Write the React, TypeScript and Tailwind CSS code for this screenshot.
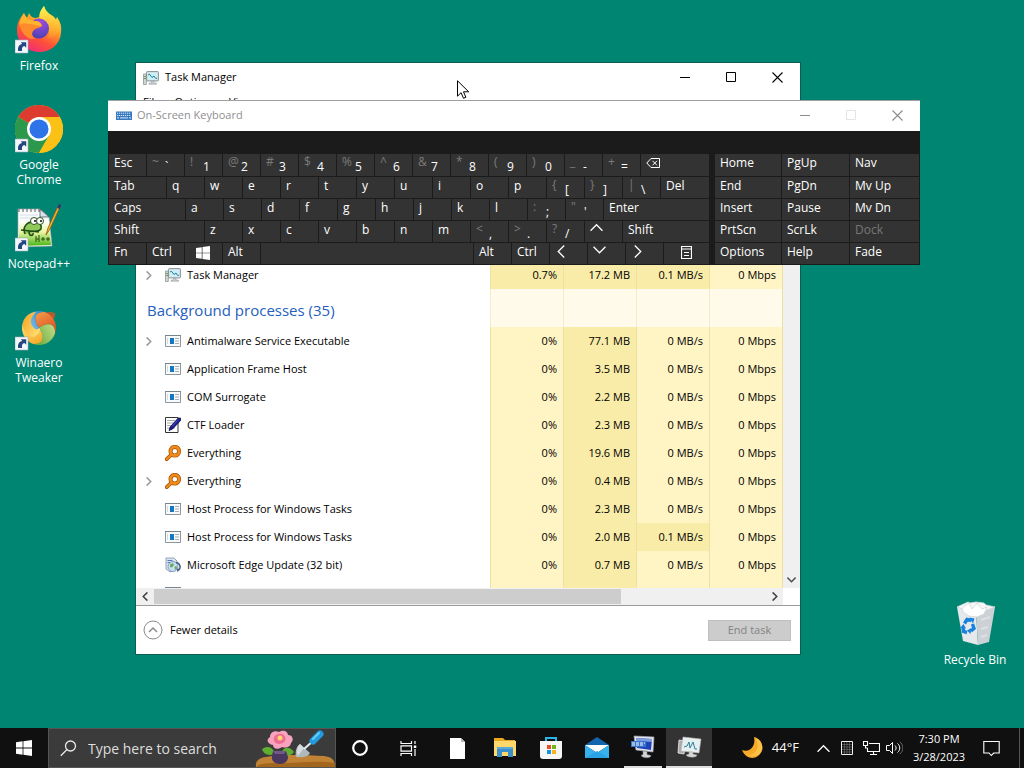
import React from 'react';

type IconKind = 'monitor' | 'app' | 'pen' | 'key' | 'update';

const svgBase = 'block shrink-0';

function WindowsLogo({ className }: { className: string }) {
  return (
    <svg viewBox="0 0 16 16" className={`${svgBase} ${className}`} fill="#fff" aria-hidden="true">
      <path d="M0 2.2 6.6 1.3v6.3H0zM7.4 1.2 16 0v7.6H7.4zM0 8.4h6.6v6.3L0 13.8zM7.4 8.4H16V16l-8.6-1.2z" />
    </svg>
  );
}

function MonitorIcon() {
  return (
    <svg viewBox="0 0 16 16" className={`${svgBase} size-4`} aria-hidden="true">
      <path d="M.5 4h2.800v10.500H.5z" fill="#d5d8d5" stroke="#8d9590" strokeWidth=".8" />
      <path d="M1 6.500h2M1 8.500h2" stroke="#6c9a62" />
      <rect x="3.600" y="1.600" width="11.800" height="9.300" rx=".6" fill="#dfe6ea" stroke="#869199" strokeWidth="1" />
      <rect x="5" y="3" width="9" height="6.500" fill="#c9f1f8" />
      <path d="m5 5 1.500-.8 2.500 3.300 2-1.500 1.500 2.300H14" fill="none" stroke="#257d9b" strokeWidth="1" />
      <path d="M8.500 11h2.500v2h2.500v1.300H6V13h2.500z" fill="#c5cbce" stroke="#959da1" strokeWidth=".5" />
    </svg>
  );
}

function RowIcon({ kind }: { kind: IconKind }) {
  if (kind === 'monitor') return <MonitorIcon />;
  if (kind === 'app')
    return (
      <svg viewBox="0 0 16 16" className={`${svgBase} size-4`} aria-hidden="true">
        <path d="M.5 2.500h15v11H.5z" fill="#f8fafb" stroke="#8b979d" />
        <path d="M0 2.500h16" stroke="#76848b" strokeWidth="1" />
        <path d="M5 5h4v6H5z" fill="#1378c4" />
        <path d="M10 5.500h4M10 8h4M10 10.500h4" stroke="#a5adb2" />
        <path d="M2.500 5v6" stroke="#d5dcdf" />
      </svg>
    );
  if (kind === 'pen')
    return (
      <svg viewBox="0 0 16 16" className={`${svgBase} size-4`} aria-hidden="true">
        <path d="M.5.5h12.500v15H.5z" fill="#fff" stroke="#333" />
        <path d="M2.500 3.500h8M2.500 6h8M2.500 8.500h8M2.500 11h8" stroke="#555" strokeDasharray="1 1" />
        <path d="m4 13.500 1.200-3.600L13 1.300 15.600 1l.2 2.200-8.300 8.900z" fill="#16168c" stroke="#0a0a40" strokeWidth=".8" />
        <path d="m7 9.500 6.800-7" stroke="#4a58d8" />
      </svg>
    );
  if (kind === 'key')
    return (
      <svg viewBox="0 0 16 16" className={`${svgBase} size-4`} aria-hidden="true">
        <path d="M6.500 9.500 1.700 14.200" stroke="#a65006" strokeWidth="3.800" strokeLinecap="round" />
        <circle cx="9.800" cy="6.200" r="4.300" fill="#fff" stroke="#a65006" strokeWidth="4" />
        <path d="M6.500 9.500 1.800 14.100" stroke="#ee8b1a" strokeWidth="2.400" strokeLinecap="round" />
        <circle cx="9.800" cy="6.200" r="4.300" fill="none" stroke="#ee8b1a" strokeWidth="2.800" />
      </svg>
    );
  return (
    <svg viewBox="0 0 16 16" className={`${svgBase} size-4`} aria-hidden="true">
      <path d="M1 1h8l3 3v8l-7 3-4-3z" fill="#dce5ee" stroke="#7c8fae" strokeWidth=".8" />
      <path d="M2.500 3.500h5M2.500 5.500h7" stroke="#5b78b6" />
      <circle cx="8" cy="9.500" r="5" fill="#c6e0f2" stroke="#6f8db0" strokeWidth=".8" />
      <path d="M5 7.500 8 6l1 2-2 2.500-2-.5zM9.500 10l2-1.500.5 3-2 1.500z" fill="#6aa868" />
      <path d="M11 5.500c4 .5 5.500 5 2.500 7.500" stroke="#4a5d86" strokeWidth="1.500" fill="none" />
      <path d="m15.500 12-3 3-.8-3.200z" fill="#4a5d86" />
    </svg>
  );
}

function Chevron({ dir, className, stroke = 1 }: { dir: 'up' | 'down' | 'left' | 'right'; className: string; stroke?: number }) {
  const paths = {
    up: 'M.5 9 6 3.500 11.500 9',
    down: 'M.5 3.500 6 9l5.500-5.500',
    left: 'M8.500.5 3 6l5.500 5.500',
    right: 'M3.500.5 9 6l-5.500 5.500',
  };
  return (
    <svg viewBox="0 0 12 12" className={`${svgBase} ${className}`} fill="none" stroke="currentColor" strokeWidth={stroke} aria-hidden="true">
      <path d={paths[dir]} />
    </svg>
  );
}

function CaptionButtons({ tone, maxTone }: { tone: string; maxTone: string }) {
  const btn = 'flex h-[29px] w-[46px] items-center justify-center';
  return (
    <div className="flex">
      <button aria-label="Minimize" className={`${btn} ${tone}`}>
        <svg viewBox="0 0 11 11" className="size-[11px]" stroke="currentColor"><path d="M0 5.500h10" /></svg>
      </button>
      <button aria-label="Maximize" className={`${btn} ${maxTone}`}>
        <svg viewBox="0 0 11 11" className="size-[11px]" fill="none" stroke="currentColor"><path d="M.5.5h9v9h-9z" /></svg>
      </button>
      <button aria-label="Close" className={`${btn} ${tone}`}>
        <svg viewBox="0 0 11 11" className="size-[11px]" fill="none" stroke="currentColor" strokeWidth="1.100"><path d="M.5.5l10 10M10.500.5l-10 10" /></svg>
      </button>
    </div>
  );
}

interface Proc {
  name: string;
  icon: IconKind;
  expand?: boolean;
  values: [string, string, string, string];
}

const processes: Proc[] = [
  { name: 'Antimalware Service Executable', icon: 'app', expand: true, values: ['0%', '77.1 MB', '0 MB/s', '0 Mbps'] },
  { name: 'Application Frame Host', icon: 'app', values: ['0%', '3.5 MB', '0 MB/s', '0 Mbps'] },
  { name: 'COM Surrogate', icon: 'app', values: ['0%', '2.2 MB', '0 MB/s', '0 Mbps'] },
  { name: 'CTF Loader', icon: 'pen', values: ['0%', '2.3 MB', '0 MB/s', '0 Mbps'] },
  { name: 'Everything', icon: 'key', values: ['0%', '19.6 MB', '0 MB/s', '0 Mbps'] },
  { name: 'Everything', icon: 'key', expand: true, values: ['0%', '0.4 MB', '0 MB/s', '0 Mbps'] },
  { name: 'Host Process for Windows Tasks', icon: 'app', values: ['0%', '2.3 MB', '0 MB/s', '0 Mbps'] },
  { name: 'Host Process for Windows Tasks', icon: 'app', values: ['0%', '2.0 MB', '0.1 MB/s', '0 Mbps'] },
  { name: 'Microsoft Edge Update (32 bit)', icon: 'update', values: ['0%', '0.7 MB', '0 MB/s', '0 Mbps'] },
];

function ProcessRow({ proc }: { proc: Proc }) {
  return (
    <tr className="h-7">
      <th scope="row" className="p-0 text-left font-normal">
        <div className="flex h-7 items-center">
          <span className="flex w-[29px] shrink-0 items-center pl-2">
            {proc.expand && (
              <button aria-label={`Expand ${proc.name}`} className="text-[#999]">
                <Chevron dir="right" className="size-[9px]" stroke={2} />
              </button>
            )}
          </span>
          <RowIcon kind={proc.icon} />
          <span className="pl-1.5 whitespace-nowrap">{proc.name}</span>
        </div>
      </th>
      {proc.values.map((v, i) => {
        const hot = i === 1 || v === '0.1 MB/s' || v === '0.7%';
        return (
          <td key={i} className={`border-l border-[#eee0a0] p-0 pr-1.5 text-right whitespace-nowrap ${hot ? 'bg-[#f9eca8]' : 'bg-[#fff4c4]'}`}>
            {v}
          </td>
        );
      })}
    </tr>
  );
}

function TaskManager() {
  return (
    <section aria-label="Task Manager" className="absolute top-[62px] left-[135px] flex h-[593px] w-[666px] flex-col border border-[#0b5f52] bg-white text-[11px] text-black">
      <header className="flex h-[29px] shrink-0 items-start justify-between">
        <div className="flex h-[29px] items-center gap-1.5 pl-[7px]">
          <MonitorIcon />
          <span>Task Manager</span>
        </div>
        <CaptionButtons tone="text-black" maxTone="text-black" />
      </header>
      <nav className="flex h-5 shrink-0 items-center gap-3.5 px-[7px]">
        <button>File</button>
        <button>Options</button>
        <button>View</button>
      </nav>
      <div className="mt-[149px] flex min-h-0 flex-1">
        <div className="min-w-0 flex-1 overflow-hidden">
          <table className="w-full table-fixed border-separate border-spacing-0">
            <colgroup>
              <col />
              <col className="w-[73px]" />
              <col className="w-[73px]" />
              <col className="w-[73px]" />
              <col className="w-[73px]" />
            </colgroup>
            <tbody>
              <ProcessRow proc={{ name: 'Task Manager', icon: 'monitor', expand: true, values: ['0.7%', '17.2 MB', '0.1 MB/s', '0 Mbps'] }} />
              <tr className="h-[38px]">
                <th scope="rowgroup" className="p-0 pt-1 pl-[11px] text-left text-[15px] font-normal whitespace-nowrap text-[#2560bd]">
                  Background processes (35)
                </th>
                {[0, 1, 2, 3].map((i) => (
                  <td key={i} className="border-l border-[#f3ead0] bg-[#fffaea] p-0" />
                ))}
              </tr>
              {processes.map((p, i) => (
                <ProcessRow key={i} proc={p} />
              ))}
              <tr className="h-7 align-top">
                <td className="p-0 pt-2 pl-[29px]"><span className="block h-1 w-4 border-t border-[#76848b] bg-white" /></td>
                <td className="border-l border-[#eee0a0] bg-[#fff4c4]" />
                <td className="border-l border-[#eee0a0] bg-[#f9eca8]" />
                <td className="border-l border-[#eee0a0] bg-[#fff4c4]" />
                <td className="border-l border-[#eee0a0] bg-[#fff4c4]" />
              </tr>
            </tbody>
          </table>
        </div>
        <div className="flex w-[18px] flex-col items-center justify-end border-l border-[#eee0a0] bg-[#f0f0f0] pb-1 text-[#505050]">
          <button aria-label="Scroll down"><Chevron dir="down" className="size-[9px]" stroke={2} /></button>
        </div>
      </div>
      <div className="flex h-[17px] shrink-0 pr-[17px]">
        <div className="flex flex-1 items-center bg-[#f0f0f0] text-[#404040]">
          <button aria-label="Scroll left" className="flex w-[18px] justify-center"><Chevron dir="left" className="size-[9px]" stroke={2} /></button>
          <div className="flex h-[15px] flex-1"><div className="w-[467px] bg-[#cdcdcd]" /></div>
          <button aria-label="Scroll right" className="flex w-[17px] justify-center"><Chevron dir="right" className="size-[9px]" stroke={2} /></button>
        </div>
      </div>
      <footer className="flex h-[49px] shrink-0 items-center justify-between border-t border-[#9a9a9a] pr-[9px] pl-[7px]">
        <button className="flex items-center gap-[7px]">
          <svg viewBox="0 0 20 20" className="size-5" fill="none" stroke="#8a8a8a" aria-hidden="true">
            <circle cx="10" cy="10" r="9" />
            <path d="m6 12 4-4 4 4" strokeWidth="1.500" />
          </svg>
          Fewer details
        </button>
        <button disabled className="h-[21px] w-[83px] border border-[#bfbfbf] bg-[#cccccc] text-[#838383]">End task</button>
      </footer>
    </section>
  );
}

const keyBase = 'flex shrink-0 items-start bg-[#333] pl-[5px] text-left text-white hover:bg-[#444]';
const std = 'w-[37px]';
const fill = 'flex-1';

interface KeyDef {
  label?: string;
  alt?: string;
  size?: string;
  art?: 'back' | 'win' | 'up' | 'down' | 'left' | 'right' | 'menu';
}

function KeyArt({ art }: { art: NonNullable<KeyDef['art']> }) {
  if (art === 'win') return <WindowsLogo className="mt-[3px] ml-1.5 size-[14px]" />;
  if (art === 'back')
    return (
      <svg viewBox="0 0 14 12" className="mt-[3px] h-3 w-[14px]" fill="none" stroke="#fff" aria-hidden="true">
        <path d="M5 1.500h8.500v9H5L.8 6zM6.500 3.800l4.500 4.500M11 3.800 6.500 8.300" />
      </svg>
    );
  if (art === 'menu')
    return (
      <svg viewBox="0 0 11 13" className="mt-[3px] ml-3 h-[13px] w-[11px]" fill="none" stroke="#fff" aria-hidden="true">
        <path d="M.5.5h10v12H.5zM0 3h11M3 6.500h5M3 9.500h5" strokeWidth="1.200" />
      </svg>
    );
  return <Chevron dir={art} className={art === 'up' || art === 'down' ? 'size-[13px]' : 'mt-0.5 size-[13px]'} stroke={1.2} />;
}

function Key({ k }: { k: KeyDef }) {
  return (
    <button className={`${keyBase} ${k.size ?? std}`} aria-label={k.art}>
      {k.art && <KeyArt art={k.art} />}
      {k.alt !== undefined && <span className="w-[13px] shrink-0 leading-4 text-[#7b7b7b]">{k.alt}</span>}
      {k.label && <span className={k.alt !== undefined ? 'pt-1 leading-[18px]' : 'leading-[18px]'}>{k.label}</span>}
    </button>
  );
}

const letters = (s: string): KeyDef[] => s.split('').map((label) => ({ label }));

const keyRows: KeyDef[][] = [
  [
    { label: 'Esc' }, { alt: '~', label: '`' }, { alt: '!', label: '1' }, { alt: '@', label: '2' }, { alt: '#', label: '3' },
    { alt: '$', label: '4' }, { alt: '%', label: '5' }, { alt: '^', label: '6' }, { alt: '&', label: '7' }, { alt: '*', label: '8' },
    { alt: '(', label: '9' }, { alt: ')', label: '0' }, { alt: '_', label: '-' }, { alt: '+', label: '=' }, { art: 'back', size: fill },
  ],
  [{ label: 'Tab', size: 'w-[57px]' }, ...letters('qwertyuiop'), { alt: '{', label: '[' }, { alt: '}', label: ']' }, { alt: '|', label: '\\' }, { label: 'Del', size: fill }],
  [{ label: 'Caps', size: 'w-[76px]' }, ...letters('asdfghjkl'), { alt: ':', label: ';' }, { alt: '"', label: "'" }, { label: 'Enter', size: fill }],
  [{ label: 'Shift', size: 'w-[95px]' }, ...letters('zxcvbnm'), { alt: '<', label: ',' }, { alt: '>', label: '.' }, { alt: '?', label: '/' }, { art: 'up' }, { label: 'Shift', size: fill }],
  [
    { label: 'Fn' }, { label: 'Ctrl' }, { art: 'win' }, { label: 'Alt' }, { size: 'w-[212px]' }, { label: 'Alt' }, { label: 'Ctrl' },
    { art: 'left' }, { art: 'down' }, { art: 'right' }, { art: 'menu', size: fill },
  ],
];

const navKeys = [['Home', 'PgUp'], ['End', 'PgDn'], ['Insert', 'Pause'], ['PrtScn', 'ScrLk'], ['Options', 'Help']];
const sideKeys = ['Nav', 'Mv Up', 'Mv Dn', 'Dock', 'Fade'];

const keyGrid = 'grid grid-rows-[22px_21px_21px_21px_21px] gap-px';

function OnScreenKeyboard() {
  return (
    <section aria-label="On-Screen Keyboard" className="absolute top-[100px] left-[108px] w-[812px] border-t border-[#a0a0a0] bg-[#1b1b1b] text-[12px]">
      <header className="flex h-[30px] items-start justify-between bg-white text-[11px]">
        <div className="flex h-[29px] items-center gap-[5px] pl-2 text-[#909090]">
          <svg viewBox="0 0 16 9" className="h-[9px] w-4" aria-hidden="true">
            <path d="M0 .5h16v8.500H0z" fill="#3878bd" />
            <path d="M1 2.200h14M1 4.500h14" stroke="#d8eaff" strokeDasharray="1.200 .8" />
            <path d="M1 6.900h2M4 6.900h8M13 6.900h2" stroke="#d8eaff" />
          </svg>
          <span>On-Screen Keyboard</span>
        </div>
        <CaptionButtons tone="text-[#8c8c8c]" maxTone="text-[#e4e4e4]" />
      </header>
      <div className="flex pt-[23px] pr-px pb-px pl-px">
        <div className={`flex-1 ${keyGrid}`}>
          {keyRows.map((row, r) => (
            <div key={r} className="flex gap-px">
              {row.map((k, i) => <Key key={i} k={k} />)}
            </div>
          ))}
        </div>
        <div className={`ml-1.5 ${keyGrid}`}>
          {navKeys.map((pair) => (
            <div key={pair[0]} className="flex gap-px">
              <Key k={{ label: pair[0], size: 'w-[66px]' }} />
              <Key k={{ label: pair[1], size: 'w-[67px]' }} />
            </div>
          ))}
        </div>
        <div className={`ml-px ${keyGrid}`}>
          {sideKeys.map((label) => (
            <button key={label} className="flex w-[69px] items-start bg-[#333] pl-[5px] leading-[18px] text-white disabled:text-[#777]" disabled={label === 'Dock'}>
              {label}
            </button>
          ))}
        </div>
      </div>
    </section>
  );
}

function ShortcutBadge() {
  return (
    <g>
      <path d="M0 34h13v13H0z" fill="#f4f7fb" stroke="#9fb0c0" strokeWidth=".6" />
      <path d="M3.200 45c-.8-4 1-6.600 4-7L5.800 36.300h5.400v5.500L9.400 40c-2 .3-2.800 2-2.300 5z" fill="#24477f" />
    </g>
  );
}

const swirl = 'M24 8A17 17 0 0 1 41 25C38 15 30 16 24 25C15 19 14 11 24 8Z';

const desktopArt = {
  firefox: (
    <svg viewBox="0 0 48 48" className="size-12" aria-hidden="true">
      <defs>
        <linearGradient id="fx" x1=".8" y1="0" x2=".3" y2="1"><stop offset="0" stopColor="#fff14a" /><stop offset=".4" stopColor="#ffa22a" /><stop offset=".7" stopColor="#ff5138" /><stop offset="1" stopColor="#ee2c7a" /></linearGradient>
        <radialGradient id="fxc" cx=".6" cy=".2" r=".8"><stop offset="0" stopColor="#a04be0" /><stop offset="1" stopColor="#4a41b5" /></radialGradient>
        <linearGradient id="fxf" x1=".4" y1="0" x2=".6" y2="1"><stop offset="0" stopColor="#fff04e" /><stop offset="1" stopColor="#ffab2c" stopOpacity=".3" /></linearGradient>
      </defs>
      <path d="M29 0c1 5 4 7 7 9 3 1 4 3 5 5l1-3c3 5 5 9 4 16-1 12-11 19-22 19S2 37 2 25c0-6 1-10 5-15l2 5 3-3 2-5c1 3 4 5 7 5l3-1c1-5 3-8 5-11z" fill="url(#fx)" />
      <path d="M29 0c-5 6-6 10-2 15 6 4 9 10 6 17 6 0 11-5 13-10 0-4-2-8-4-11l-1 3c-2-5-9-5-12-14z" fill="url(#fxf)" />
      <circle cx="24" cy="22.500" r="10" fill="url(#fxc)" />
      <path d="M4 17c2-4 2-6 5-10 2 5 6 8 11 8 4 0 6 2 7 5-2 2-6 2-8 4-3 3-2 6 1 9-8 1-14-6-16-16z" fill="#ff8a2b" />
      <path d="M9 7c1 4 5 7 11 8 4 0 6 2 7 5-5 0-9-2-13-2-4-1-7-1-9 1 0-5 1-8 4-12z" fill="#ffb32f" />
      <ShortcutBadge />
    </svg>
  ),
  chrome: (
    <svg viewBox="0 0 48 48" className="size-12" aria-hidden="true">
      <circle cx="24" cy="24" r="24" fill="#fbc116" />
      <path d="M24 24 3.200 12A24 24 0 0 1 44.800 12z" fill="#dd3b30" />
      <path d="M24 24 3.200 12A24 24 0 0 0 24 48l10.400-18z" fill="#2b984b" />
      <path d="M24 12h20.800A24 24 0 0 1 24 48l10.400-18z" fill="#fbc116" />
      <circle cx="24" cy="24" r="12" fill="#fff" />
      <circle cx="24" cy="24" r="9.500" fill="#2f73e8" />
      <ShortcutBadge />
    </svg>
  ),
  notepad: (
    <svg viewBox="0 0 48 48" className="size-12" aria-hidden="true">
      <defs><linearGradient id="np" x2="0" y2="1"><stop offset="0" stopColor="#fff" /><stop offset=".45" stopColor="#e9f5a0" /><stop offset="1" stopColor="#48b514" /></linearGradient></defs>
      <path d="M3 5h22l9 8 3 29-34 1z" fill="#fafafa" stroke="#aaa" strokeWidth=".6" />
      <path d="M25 5v8h9z" fill="#d8e2ea" stroke="#456" strokeWidth=".8" />
      <path d="M4 17h30l2 24-32 1z" fill="url(#np)" />
      <path d="M4 5v3M8 5v3M12 5v3M16 5v3M20 5v3M24 5v3" stroke="#555" />
      <path d="M5 11h18M5 14h18" stroke="#c3d5e5" strokeWidth=".7" />
      <path d="M10 30c-3-7 2-13 10-12 5 0 7 3 6 7-3 4-8 1-12 3 0 5 5 4 4 1M6 26l18 2" fill="#8fc95a" stroke="#1f4c14" strokeWidth="1.500" />
      <circle cx="19" cy="17" r="3.500" fill="#fff" stroke="#2d5120" /><circle cx="25" cy="17" r="3.500" fill="#fff" stroke="#2d5120" />
      <circle cx="20" cy="17" r="1" /><circle cx="26" cy="17" r="1" />
      <path d="M21 32v6M24 31v7M21 35h3M26 35h4M28 33v4M31 35h4M33 33v4" stroke="#254d10" strokeWidth="1" />
      <path d="m31 31 2-7L43 2l2 1-10 22z" fill="#f2b42d" stroke="#8a5a18" strokeWidth=".8" />
      <path d="m42 4 2-4 2 1-1 4z" fill="#333770" />
      <ShortcutBadge />
    </svg>
  ),
  winaero: (
    <svg viewBox="0 0 48 48" className="size-12" aria-hidden="true">
      <defs>
        <linearGradient id="wy" x2="1" y2=".6"><stop offset="0" stopColor="#f5a21f" /><stop offset="1" stopColor="#ffdc70" /></linearGradient>
        <linearGradient id="wb" x2="1" y2=".6"><stop offset="0" stopColor="#a5d8f2" /><stop offset="1" stopColor="#3b8ed6" /></linearGradient>
        <linearGradient id="wr" x2="1" y2=".6"><stop offset="0" stopColor="#f4a24e" /><stop offset="1" stopColor="#e2501e" /></linearGradient>
        <linearGradient id="wg" x2="1" y2=".6"><stop offset="0" stopColor="#c8df8a" /><stop offset="1" stopColor="#6cae43" /></linearGradient>
      </defs>
      <path d="M33 17c5 0 8-2 7-7-5-2-9-1-12 1z" fill="#e2501e" opacity=".8" />
      <path d={swirl} fill="url(#wr)" transform="rotate(20 24 25)" />
      <path d={swirl} fill="url(#wg)" transform="rotate(110 24 25)" />
      <path d={swirl} fill="url(#wy)" transform="rotate(200 24 25)" />
      <path d={swirl} fill="url(#wb)" transform="rotate(290 24 25)" />
      <path d="M8 20c1-6 7-11 13-11-5 5-7 10-3 15 2 3 5 3 7 1 0 5-3 8-7 9-6-1-11-7-10-14z" fill="url(#wy)" />
      <ShortcutBadge />
    </svg>
  ),
  bin: (
    <svg viewBox="0 0 48 48" className="size-12" aria-hidden="true">
      <path d="m6 7 19 6 2 32-15-4z" fill="#e6e9ec" />
      <path d="m25 13 19-6-6 35-11 3z" fill="#ccd1d5" />
      <path d="m6 7 11-5 2 1 6-1 8 1 2 2 9 2-19 7z" fill="#f4f6f7" stroke="#d5dadd" strokeWidth=".8" />
      <path d="m11 8 7-5 3 6 5-6 5 6 5-2-3 7-7 3-8-1-6-4z" fill="#fff" stroke="#cbd1d5" strokeWidth=".7" />
      <path d="m30 20 9-3M30 29l7-2M30 37l6-2" stroke="#dde1e4" strokeWidth="2" />
      <g fill="none" stroke="#1781df" strokeWidth="3.400">
        <path d="M13.500 23.500 16 19.500l4 1" />
        <path d="m21.500 24 1.500 4.500-3 2.500" />
        <path d="M16 32.500 12.500 31.500l-.5-4" />
      </g>
      <path d="m18 17.500 5.500 1-1.500 5zM20.500 28l-1 6-3.500-3.500zM9 28l3.500-4 2.500 4.500z" fill="#1781df" />
    </svg>
  ),
};

function DesktopIcon({ art, label }: { art: keyof typeof desktopArt; label: string }) {
  return (
    <a href="#" className="flex h-[99px] w-[76px] flex-col items-center gap-1 text-center text-[12px] leading-[15px] text-white">
      {desktopArt[art]}
      <span className="w-min">{label}</span>
    </a>
  );
}

function Cursor() {
  return (
    <svg viewBox="0 0 13 20" className="absolute top-20 left-[457px] h-5 w-[13px]" fill="#fff" stroke="#000" aria-hidden="true">
      <path d="M.5.8v15.400l3.600-3.500 2.400 5.600 2.400-1-2.400-5.500h5.200z" />
    </svg>
  );
}

function SearchArt() {
  return (
    <svg viewBox="0 0 80 38" className="h-[38px] w-20 shrink-0" aria-hidden="true">
      <path d="M1 38c-1-6 3-9 10-10 15-3 40-2 58-1 8 1 11 4 11 11z" fill="#c08234" />
      <path d="M2 38c0-3 8-4 20-4 20 0 40-3 58 0v4z" fill="#a3661f" />
      <path d="M7 20c7-5 12 0 13 5-6 2-11 1-13-5zM39 23c-5-7-11-4-12 0 3 5 8 5 12 0z" fill="#5fae31" />
      <path d="M18 22h13l2 6c0 4-3 7-8 7s-9-3-8-8z" fill="#493760" />
      <path d="M18 22h13l-2 3h-9z" fill="#745889" />
      <path d="M24 3c5-3 9 0 9 3 5 0 6 5 3 8-1 5-6 5-9 4-4 3-9 2-9-2-6-1-7-6-3-8 0-5 5-7 9-5z" fill="#f7a3bd" />
      <path d="M23 5c5-1 9 3 7 7-3 4-9 4-11 0-1-4 1-6 4-7z" fill="#ee6c92" />
      <circle cx="25" cy="9" r="2.500" fill="#ffd66f" />
      <path d="M45 15l10 9c-2 4-8 5-14 4-1-5 0-10 4-13z" fill="#aeb8bd" />
      <path d="m45 15 4 4-6 8c-2-4-1-9 2-12z" fill="#d6dde0" />
      <path d="m49 20 9-8" stroke="#e6edf0" strokeWidth="2" />
      <path d="m58 12 7-7" stroke="#239add" strokeWidth="7" strokeLinecap="round" />
      <path d="m58 10 6-6" stroke="#63cdf7" strokeWidth="2" strokeLinecap="round" />
    </svg>
  );
}

const appArt = {
  file: <svg viewBox="0 0 28 28" className="size-7"><path d="M7 4h11l4 4v17H7z" fill="#fff" /><path d="M18 4v4h4z" fill="#bbb" /></svg>,
  folder: (
    <svg viewBox="0 0 28 28" className="size-7"><path d="M3 5h9l2 2h10v4H3z" fill="#e9a91e" /><path d="M3 8h22v15H3z" fill="#ffd76a" /><path d="M6 14h16v10h-5v-5h-6v5H6z" fill="#3b8fcb" /><path d="M6 14h16v2H6z" fill="#5aa9da" /></svg>
  ),
  store: (
    <svg viewBox="0 0 28 28" className="size-7"><path d="M9 9V5h10v4" fill="none" stroke="#27b5e5" strokeWidth="2" /><path d="M3 8h22v15c0 2-1 3-3 3H6c-2 0-3-1-3-3z" fill="#f6f6f6" /><path d="M10 12h4v4h-4z" fill="#e94f24" /><path d="M15 12h4v4h-4z" fill="#72b51c" /><path d="M10 17h4v4h-4z" fill="#1696df" /><path d="M15 17h4v4h-4z" fill="#f8b51b" /></svg>
  ),
  mail: (
    <svg viewBox="0 0 28 28" className="size-7"><path d="M2 12 14 4l12 8v4H2z" fill="#1565ac" /><path d="M2 12h24L14 20z" fill="#fff" /><path d="m2 12 12 8 12-8v13H2z" fill="#36b2ec" /><path d="m5 12 9 7 9-7z" fill="#fff" /><path d="M2 25 14 18l12 7z" fill="#2aa3e4" /></svg>
  ),
  remote: (
    <svg viewBox="0 0 28 28" className="size-7"><path d="m5 3 20 1-1 15-17-2z" fill="#e4e6eb" stroke="#9ca3b1" strokeWidth=".7" /><path d="m7 5 16 1-1 11-14-2z" fill="#2044b8" /><path d="m7 5 16 1v3L7 8z" fill="#809bde" /><path d="M2 8h15v6H2z" fill="#3675ce" /><path d="M3 10h13M3 12h11" stroke="#fff" strokeDasharray="3 1" /><path d="m14 18 4 .5v3l4 1c0 3-8 3-10 0l2-1z" fill="#cfd3d8" stroke="#888" strokeWidth=".5" /></svg>
  ),
  taskmgr: (
    <svg viewBox="0 0 28 28" className="size-7"><path d="m4 7 7 1-2 13-6-1z" fill="#a9aaab" stroke="#eee" strokeWidth=".8" /><path d="m8 4 18 2-2 14-18-2z" fill="#eceeee" stroke="#b1b4b5" strokeWidth=".6" /><path d="m10 6 14 2-2 10-14-2z" fill="#e3eff0" /><path d="m9 14 3-1 2-4 1 6 3-6 2 7h2" fill="none" stroke="#317c96" /><path d="M14 19h4v2l4 1c0 3-9 3-11 0l3-1z" fill="#d5d7d8" stroke="#999" strokeWidth=".5" /></svg>
  ),
};

function Taskbar() {
  const app = 'flex h-10 w-[46px] shrink-0 items-center justify-center border-b-2';
  return (
    <footer className="flex h-10 shrink-0 items-center bg-[#101010] text-white">
      <button aria-label="Start" className="flex w-12 shrink-0 justify-center"><WindowsLogo className="size-4" /></button>
      <label className="flex h-10 w-[288px] shrink-0 items-center border border-[#555] bg-[#3b3b3b] pl-[11px]">
        <svg viewBox="0 0 17 17" className="size-[17px] shrink-0" fill="none" stroke="#e8e8e8" strokeWidth="1.300" aria-hidden="true"><circle cx="10.500" cy="6" r="5" /><path d="M7 9.500.8 15.800" /></svg>
        <input aria-label="Search" placeholder="Type here to search" className="min-w-0 flex-1 bg-transparent pl-[11px] text-[14px] outline-none placeholder:text-[#dedede]" />
        <SearchArt />
      </label>
      <button aria-label="Cortana" className="flex w-12 shrink-0 justify-center"><svg viewBox="0 0 18 18" className="size-[18px]"><circle cx="9" cy="9" r="6.800" fill="none" stroke="#fff" strokeWidth="2.200" /></svg></button>
      <button aria-label="Task view" className="flex w-12 shrink-0 justify-center">
        <svg viewBox="0 0 17 15" className="h-[15px] w-[17px]" fill="none" stroke="#fff"><path d="M1 0v2.500h10.500V0M1 15v-2.500h10.500V15M1 4.800h10.500v5.400H1zM15 0v3M15 8v7" strokeWidth="1.200" /><path d="M13.800 4.500h2.500V7h-2.500z" fill="#fff" stroke="none" /></svg>
      </button>
      <button aria-label="Blank document" className="flex w-[50px] shrink-0 justify-center">{appArt.file}</button>
      <div className="flex">
        <button aria-label="File Explorer" className={`${app} border-transparent`}>{appArt.folder}</button>
        <button aria-label="Store" className={`${app} border-transparent`}>{appArt.store}</button>
        <button aria-label="Mail" className={`${app} border-transparent`}>{appArt.mail}</button>
        <button aria-label="Remote window" className="flex h-10 w-[46px] shrink-0 justify-center"><span className="flex h-10 w-[38px] items-center justify-center border-b-2 border-[#ddd]">{appArt.remote}</span></button>
        <button aria-label="Task Manager" className={`${app} border-[#ddd] bg-[#333]`}>{appArt.taskmgr}</button>
      </div>
      <div className="ml-auto flex h-10 items-center">
        <button className="flex items-center gap-2 text-[13px]">
          <svg viewBox="0 0 24 24" className="size-6" aria-hidden="true"><path d="M14 1c9 2 11 13 4 19-5 4-13 2-16-6 8 3 14-4 12-13z" fill="#f7a927" /><path d="M15 2c6 8 1 18-8 17 9 4 18-2 15-10-1-4-4-6-7-7z" fill="#ffcf57" opacity=".65" /></svg>
          44°F
        </button>
        <button aria-label="Show hidden icons" className="pl-[18px]"><Chevron dir="up" className="size-[13px]" stroke={1.2} /></button>
        <button aria-label="Touch keyboard" className="pl-[11px]">
          <svg viewBox="0 0 12 14" className="h-[14px] w-3" fill="none" stroke="#eee"><path d="M.5.5h11v13H.5z" /><path d="M3.500 1v12M6 1v12M8.500 1v12M1 3.500h10M1 6h10M1 8.500h10M1 11h10" stroke="#777" strokeWidth=".6" /></svg>
        </button>
        <button aria-label="Network" className="pl-2.5">
          <svg viewBox="0 0 17 15" className="h-[15px] w-[17px]" fill="none" stroke="#fff"><path d="M6 2.500h10.500v8h-12V7M.5.5h4v4h-4zM2.500 4.500v2.500h2M10.500 10.500v3M7 13.500h7" strokeWidth="1.100" /></svg>
        </button>
        <button aria-label="Volume" className="pl-1.5">
          <svg viewBox="0 0 17 14" className="h-[14px] w-[17px]" fill="none" stroke="#fff"><path d="M.5 4.500h3l3-3v11l-3-3h-3zM9 4.500c1.500 1.500 1.500 3.500 0 5M11.500 2.500c3 2.500 3 6.500 0 9" /><path d="M13.800.8c4 3 4 9 0 12.400" stroke="#666" /></svg>
        </button>
        <button className="w-[72px] text-center text-[11px] leading-[18px]">7:30 PM<br />3/28/2023</button>
        <button aria-label="Notifications" className="mr-[19px] ml-2">
          <svg viewBox="0 0 17 17" className="size-[17px]" fill="none" stroke="#fff" strokeWidth="1.100"><path d="M.8 1.500h15.400v11.500h-5.500L8.300 15.500 6 13H.8z" /></svg>
        </button>
        <button aria-label="Show desktop" className="h-10 w-[5px] border-l border-[#555]" />
      </div>
    </footer>
  );
}

export default function App() {
  return (
    <div className="flex h-screen flex-col overflow-hidden bg-[#008573] font-['Open_Sans','Noto_Sans',sans-serif]">
      <main className="relative flex-1">
        <div className="flex w-[77px] flex-col items-end pt-1.5">
          <DesktopIcon art="firefox" label="Firefox" />
          <DesktopIcon art="chrome" label="Google Chrome" />
          <DesktopIcon art="notepad" label="Notepad++" />
          <DesktopIcon art="winaero" label="Winaero Tweaker" />
        </div>
        <a href="#" className="absolute right-[9px] bottom-[61px] flex w-20 flex-col items-center gap-1 text-[12px] leading-[15px] whitespace-nowrap text-white">
          {desktopArt.bin}
          Recycle Bin
        </a>
        <TaskManager />
        <OnScreenKeyboard />
        <Cursor />
      </main>
      <Taskbar />
    </div>
  );
}
